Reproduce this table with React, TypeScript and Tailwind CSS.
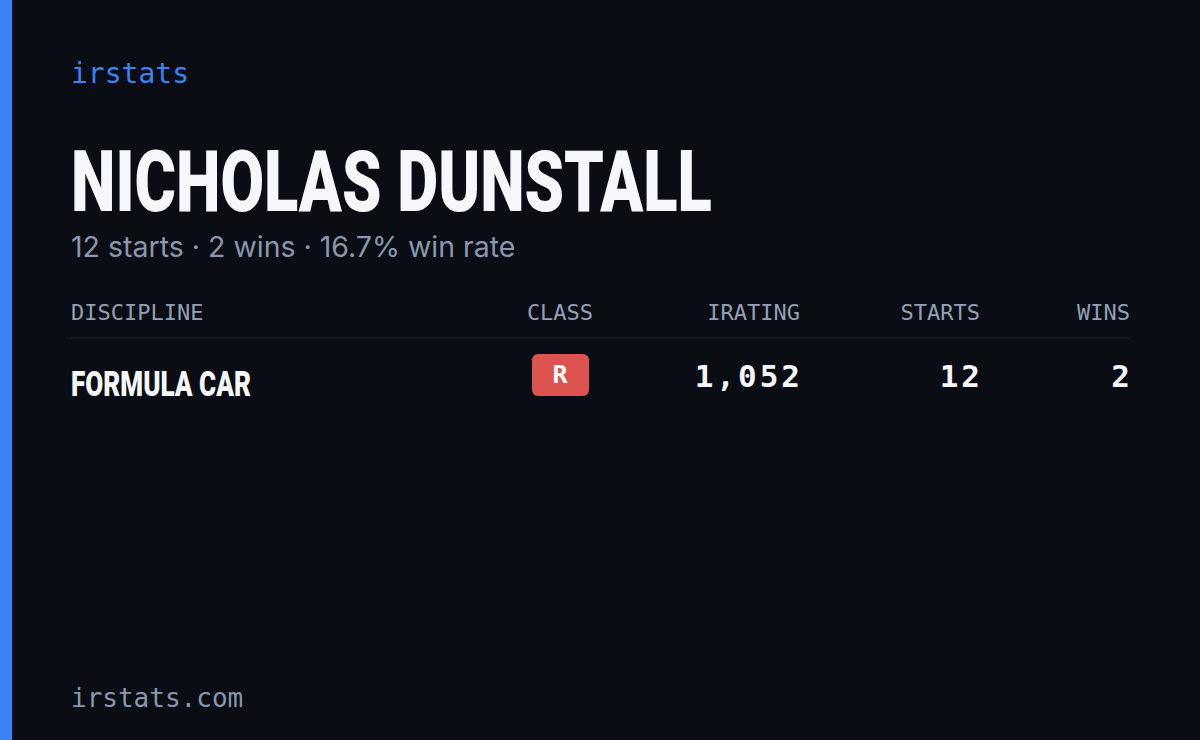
const MONO = "font-['DejaVu_Sans_Mono',monospace]"
const COND = "font-['Roboto',sans-serif]"

const stats = [
  { discipline: 'FORMULA CAR', cls: 'R', irating: '1,052', starts: 12, wins: 2 },
]

export default function App() {
  return (
    <div className="flex h-[740px] w-[1200px] bg-[#0a0d14]">
      <div className="w-3 shrink-0 bg-[#3b82f6]" />
      <div className="flex flex-1 flex-col pl-[59px] pr-[70px] pt-[60px] pb-[29px]">
        <div className={`${MONO} text-[28px] leading-none text-[#3b82f6]`}>irstats</div>

        <h1
          className={`${COND} mt-[54px] h-[80px] origin-left scale-x-[0.735] whitespace-nowrap text-[86px] font-black leading-[80px] text-[#f5f7fb]`}
        >
          NICHOLAS DUNSTALL
        </h1>
        <p className="mt-[11px] font-['Inter',sans-serif] text-[28.5px] leading-none text-[#8b97ac]">
          12 starts · 2 wins · 16.7% win rate
        </p>

        <div
          className={`${MONO} mt-[40px] grid grid-cols-[1fr_80px_200px_180px_150px] border-b-2 border-[#151923] pb-[13px] text-[22px] leading-none text-[#93a0b5]`}
        >
          <div>DISCIPLINE</div>
          <div className="text-center">CLASS</div>
          <div className="text-right">IRATING</div>
          <div className="text-right">STARTS</div>
          <div className="text-right">WINS</div>
        </div>

        {stats.map((s) => (
          <div key={s.discipline} className="grid grid-cols-[1fr_80px_200px_180px_150px] items-start pt-[15px]">
            <div
              className={`${COND} mt-[13px] origin-left scale-x-[0.745] whitespace-nowrap text-[35px] font-black leading-none text-[#f5f7fb]`}
            >
              {s.discipline}
            </div>
            <div className="flex justify-center">
              <span
                className={`${MONO} flex h-[42px] w-[57px] items-center justify-center rounded-md bg-[#dc534f] text-[25px] font-bold leading-none text-white`}
              >
                {s.cls}
              </span>
            </div>
            {[s.irating, s.starts, s.wins].map((v, i) => (
              <div
                key={i}
                className={`${MONO} -mr-[3px] mt-[7px] text-right text-[31px] font-bold leading-none tracking-[3px] text-[#f5f7fb]`}
              >
                {v}
              </div>
            ))}
          </div>
        ))}

        <div className={`${MONO} mt-auto text-[26px] leading-none text-[#8b97ac]`}>irstats.com</div>
      </div>
    </div>
  )
}
